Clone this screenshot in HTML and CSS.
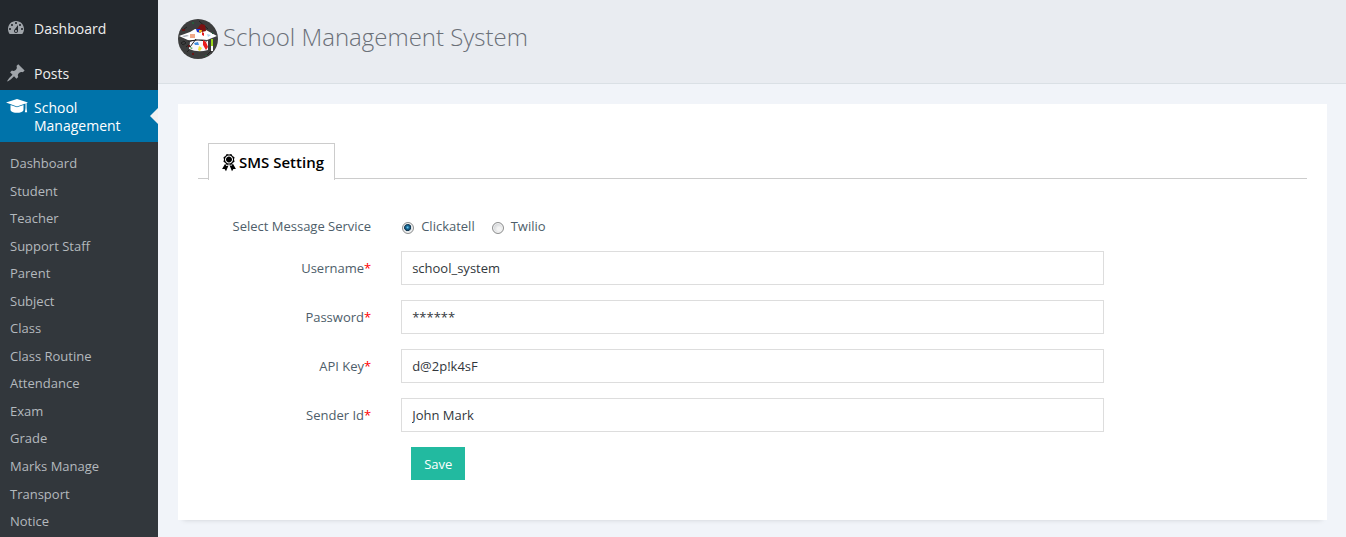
FILE: index.html
```
<!DOCTYPE html>
<html lang="en">
<head>
<meta charset="utf-8">
<meta name="viewport" content="width=device-width, initial-scale=1">
<title>School Management System</title>
<link rel="stylesheet" href="styles.css">
</head>
<body>
<div class="app">
  <nav class="sidebar" aria-label="Main menu">
    <ul class="menu">
      <li class="menu-item">
        <a class="menu-link" href="#">
          <svg class="icon" viewBox="0 0 20 20" aria-hidden="true"><path d="M3.76 16h12.48c1.1-1.37 1.76-3.11 1.76-5 0-4.42-3.58-8-8-8s-8 3.58-8 8c0 1.89.66 3.63 1.76 5zM10 4c.55 0 1 .45 1 1s-.45 1-1 1-1-.45-1-1 .45-1 1-1zM6 6c.55 0 1 .45 1 1s-.45 1-1 1-1-.45-1-1 .45-1 1-1zm8 0c.55 0 1 .45 1 1s-.45 1-1 1-1-.45-1-1 .45-1 1-1zm-5.37 5.55L12 7v6c0 1.1-.9 2-2 2s-2-.9-2-2c0-.57.24-1.08.63-1.45zM4 10c.55 0 1 .45 1 1s-.45 1-1 1-1-.45-1-1 .45-1 1-1zm12 0c.55 0 1 .45 1 1s-.45 1-1 1-1-.45-1-1 .45-1 1-1zm-5 3c0-.55-.45-1-1-1s-1 .45-1 1 .45 1 1 1 1-.45 1-1z"/></svg>
          <span>Dashboard</span>
        </a>
      </li>
      <li class="menu-item">
        <a class="menu-link" href="#">
          <svg class="icon" viewBox="0 0 20 20" aria-hidden="true"><path d="M10.44 3.02l1.82-1.82 6.36 6.35-1.83 1.82c-1.05-.68-2.48-.57-3.41.36l-.75.75c-.92.93-1.04 2.35-.35 3.41l-1.83 1.82-2.41-2.41-2.8 2.79c-.42.42-3.38 2.71-3.8 2.29s1.86-3.39 2.28-3.81l2.79-2.79L4.1 9.36l1.83-1.82c1.05.69 2.48.57 3.4-.36l.75-.75c.93-.92 1.05-2.35.36-3.41z"/></svg>
          <span>Posts</span>
        </a>
      </li>
      <li class="menu-item">
        <a class="menu-link current" href="#" aria-current="page">
          <svg class="icon icon-wide" viewBox="0 0 22 16" aria-hidden="true"><path d="M11 1 L22 4.600 L20.600 5.100 V10 C20.600 11.500 20.900 12.700 21.200 14.200 H18.800 C19.100 12.700 19.500 11.500 19.500 10 V5.500 L11 8.400 L0 4.600 Z M4.500 7 L11 9.300 L17.500 7 V12.200 C16.500 14 14 14.800 11 14.800 S5.500 14 4.500 12.200 Z"/></svg>
          <span>School Management</span>
        </a>
      </li>
    </ul>
    <ul class="submenu">
      <li><a href="#">Dashboard</a></li>
      <li><a href="#">Student</a></li>
      <li><a href="#">Teacher</a></li>
      <li><a href="#">Support Staff</a></li>
      <li><a href="#">Parent</a></li>
      <li><a href="#">Subject</a></li>
      <li><a href="#">Class</a></li>
      <li><a href="#">Class Routine</a></li>
      <li><a href="#">Attendance</a></li>
      <li><a href="#">Exam</a></li>
      <li><a href="#">Grade</a></li>
      <li><a href="#">Marks Manage</a></li>
      <li><a href="#">Transport</a></li>
      <li><a href="#">Notice</a></li>
    </ul>
  </nav>
  <main class="main">
    <header class="page-header">
      <svg class="logo" viewBox="0 0 40 40" aria-hidden="true">
        <circle cx="20" cy="20" r="20" fill="#3c3d3d"/>
        <path d="M3 24l3-2 2 2-3 2zM8 28l5-4M21 2l9 8M29 36l5-5M9 33l5-5M6 10l3-2" fill="none" stroke="#222"/>
        <path d="M1 17L12 13L17 10L28 11L39 17L29 21L20 20L12 22Z" fill="#fff"/>
        <path d="M12 23L20 20L30 22L30 31Q20 34 11 30Z" fill="#f7f7fa"/>
        <path d="M19 10l4-5 4 1 1 6-4 1z" fill="#7c1010"/>
        <path d="M18 10l4 0 1 4-4-1z" fill="#1c2fd0"/>
        <path d="M21 11l3 0-1 3-2-1z" fill="#f4c51e"/>
        <path d="M24 13l2 1 0 3-2-1z" fill="#e51b1b"/>
        <rect x="12" y="15" width="5" height="4" fill="#f0a888"/>
        <path d="M29 15l4 1-3 2z" fill="#a9d3ee"/>
        <path d="M4 17l5-1 2 1-5 1z" fill="#a4abb5"/>
        <path d="M12 28l6-8M10 22l10-1 9 1" fill="none" stroke="#222" stroke-width="1"/>
        <path d="M16 24l4-1 1 3-4 0z" fill="#3f8fe0"/>
        <path d="M25 21l3 2 2 5-2 3-3-5z" fill="#ec1c1c"/>
        <path d="M21 27l3 2-2 3-2-1z" fill="#f1e43a"/>
        <path d="M12 28l3 1-2 1z" fill="#3c9b4a"/>
        <path d="M33 20h2v7h-2z" fill="#9ad81a"/>
        <path d="M33 27h2v5h-2z" fill="#fff"/>
        <path d="M4 10h3v2h-3zM10 26h2v2h-2zM14 34h2v2h-2z" fill="#661616"/>
        <path d="M14 3h2v2h-2zM34 13h1v2h-1zM27 36h2v1h-2z" fill="#275c3c"/>
      </svg>
      <h1 class="title">School Management System</h1>
    </header>
    <section class="card">
      <div class="tabs">
        <a class="tab" href="#" aria-current="page">
          <svg class="icon" viewBox="0 0 20 20" aria-hidden="true"><path d="M4.460 5.160L5 7.460l-.54 2.290 2.010 1.240L7.700 13l2.300-.54 2.300.54 1.230-2.010 2.010-1.240L15 7.460l.54-2.300-2-1.240-1.240-2.010-2.300.55-2.290-.54-1.250 2zm5.550 6.340c-2.210 0-4-1.790-4-4 0-2.200 1.790-4 4-4 2.200 0 4 1.800 4 4 0 2.210-1.800 4-4 4zm-.02-1C8.330 10.500 7 9.160 7 7.500c0-1.650 1.330-3 2.990-3S13 5.850 13 7.500c0 1.660-1.350 3-3.010 3zm3.840 1.100l-1.280 2.240-2.080-.47L13 19.200l1.400-2.200h2.500zm-7.700.07l1.250 2.250 2.130-.51L7 19.200 5.600 17H3.100z"/></svg>
          <span>SMS Setting</span>
        </a>
      </div>
      <form class="form" action="#">
        <div class="row" role="radiogroup" aria-labelledby="service-label">
          <span class="label" id="service-label">Select Message Service</span>
          <div class="options">
            <label class="option"><input class="radio" type="radio" name="service" value="clickatell" checked>Clickatell</label>
            <label class="option"><input class="radio" type="radio" name="service" value="twilio">Twilio</label>
          </div>
        </div>
        <div class="row">
          <label class="label" for="username">Username<span class="required">*</span></label>
          <input class="field" id="username" type="text" value="school_system">
        </div>
        <div class="row">
          <label class="label" for="password">Password<span class="required">*</span></label>
          <input class="field" id="password" type="text" value="******">
        </div>
        <div class="row">
          <label class="label" for="api-key">API Key<span class="required">*</span></label>
          <input class="field" id="api-key" type="text" value="d@2p!k4sF">
        </div>
        <div class="row">
          <label class="label" for="sender">Sender Id<span class="required">*</span></label>
          <input class="field" id="sender" type="text" value="John Mark">
        </div>
        <div class="row">
          <div class="actions"><button class="save" type="submit">Save</button></div>
        </div>
      </form>
    </section>
  </main>
</div>
</body>
</html>
```
FILE: styles.css
```
* {
  box-sizing: border-box;
}

body {
  margin: 0;
  background: #f1f4f9;
  color: #4e5e6a;
  font: 13px/18px "Open Sans", "Noto Sans", sans-serif;
}

ul {
  margin: 0;
  padding: 0;
  list-style: none;
}

a {
  color: inherit;
  text-decoration: none;
}

.app {
  display: flex;
  min-height: 100vh;
}

.sidebar {
  display: flex;
  flex-direction: column;
  flex: 0 0 158px;
  background: #23282d;
}

.menu {
  display: flex;
  flex-direction: column;
  padding-top: 11px;
}

.menu-item + .menu-item {
  margin-top: 11px;
}

.menu-item:last-child {
  margin-top: 0;
}

.menu-link {
  display: flex;
  align-items: flex-start;
  gap: 8px;
  padding: 9px 6px 7px;
  color: #eee;
  font-size: 14px;
}

.icon {
  flex: none;
  width: 20px;
  height: 20px;
  fill: #a0a5aa;
}

.menu-link .icon {
  margin: -2px 0 0;
}

.current {
  position: relative;
  background: #0073aa;
  color: #fff;
}

.menu-link .icon-wide {
  width: 22px;
  height: 16px;
  margin: -1px -2px 0 0;
  fill: #fff;
}

.current::after {
  content: "";
  position: absolute;
  top: 18px;
  right: 0;
  border: 8px solid transparent;
  border-left: 0;
  border-right-color: #f1f1f1;
}

.submenu {
  flex: 1;
  padding: 8px 0 0;
  background: #32373c;
  color: #b4b9be;
  line-height: 1.35;
}

.submenu a {
  display: block;
  padding: 5px 10px;
}

.main {
  flex: 1;
  min-width: 0;
}

.page-header {
  display: flex;
  align-items: flex-start;
  gap: 5px;
  padding: 19px 20px 24px;
  border-bottom: 1px solid #dae0e5;
  background: #e9ecf1;
}

.logo {
  flex: none;
  width: 40px;
  height: 40px;
}

.title {
  margin: 0;
  color: #6b7078;
  font-size: 24px;
  font-weight: 300;
  line-height: 36px;
}

.card {
  margin: 20px 19px 17px 20px;
  padding: 39px 20px 40px;
  background: #fff;
  box-shadow: 0 5px 5px -5px rgba(0, 0, 0, 0.15);
}

.tabs {
  display: flex;
  padding: 0 10px;
  border-bottom: 1px solid #ccc;
}

.tab {
  display: flex;
  align-items: center;
  margin-bottom: -2px;
  padding: 8px 10px;
  border: 1px solid #ccc;
  border-bottom: 0;
  background: #fff;
  color: #000;
  font-size: 15px;
  font-weight: 600;
  line-height: 20px;
}

.tab .icon {
  fill: #000;
}

.form {
  display: flex;
  flex-direction: column;
  gap: 15px;
  padding: 37px 5px 0;
}

.row {
  display: grid;
  grid-template-columns: minmax(0, 2fr) minmax(0, 8fr) minmax(0, 2fr);
  align-items: center;
}

.label {
  padding: 0 15px;
  text-align: right;
}

.required {
  color: #f00;
}

.options {
  display: flex;
  gap: 16px;
  padding: 1px 15px;
}

.option {
  display: flex;
  align-items: center;
  gap: 7px;
}

.radio {
  appearance: none;
  width: 12px;
  height: 12px;
  margin: 3px 0 0 1px;
  border: 1px solid #8e8f8f;
  border-radius: 50%;
  background: radial-gradient(circle at 60% 60%, #f4f4f4 20%, #cfd2d5 70%);
  box-shadow: inset 0 0 0 1px #f4f4f4;
}

.radio:checked {
  background: radial-gradient(circle at 46% 44%, #6fcdf2 0, #1a6d9c 20%, #10334c 42%, #dfe3e6 50%);
}

.field {
  height: 34px;
  min-width: 0;
  margin: 0 15px;
  padding: 0 10px;
  border: 1px solid #ddd;
  background: #fff;
  color: #32373c;
  font: inherit;
}

.actions {
  grid-column: 2;
  padding: 0 25px;
}

.save {
  display: block;
  padding: 8px 13px 7px;
  border: 0;
  background: #22baa0;
  color: #fff;
  font: inherit;
}
```
